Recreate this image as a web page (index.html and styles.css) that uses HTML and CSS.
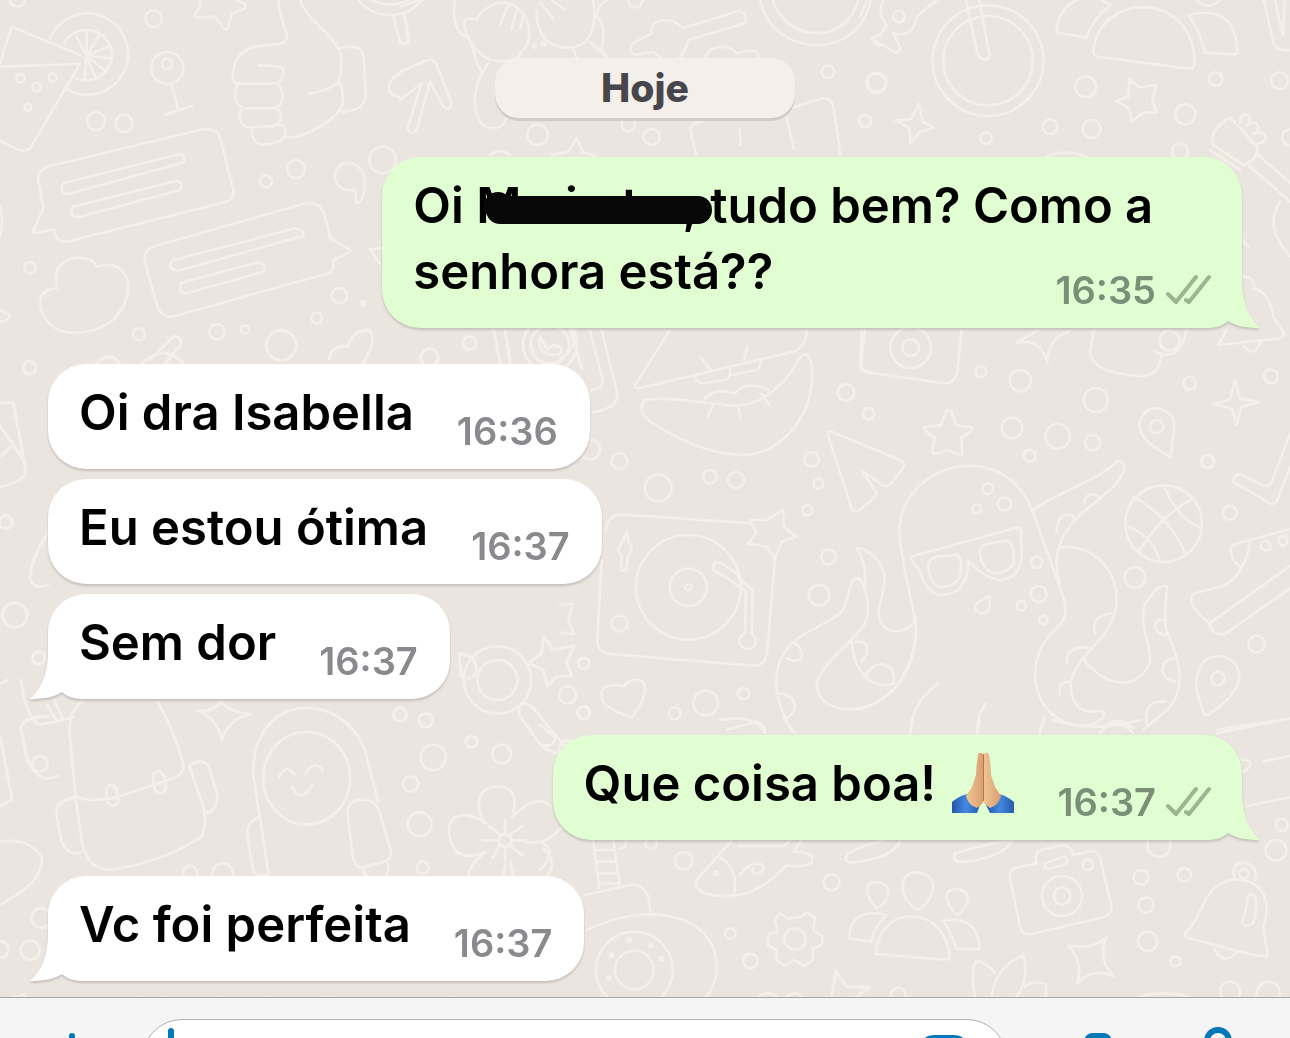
FILE: index.html
```html
<!DOCTYPE html>
<html lang="pt-BR">
<head>
    <meta charset="UTF-8">
    <meta name="viewport" content="width=device-width, initial-scale=1.0">
    <title>Conversa</title>
    <link rel="stylesheet" href="styles.css">
</head>
<body>
    <!-- Shared shapes -->
    <svg class="defs" aria-hidden="true">
        <symbol id="tail" viewBox="0 0 60 48">
            <path d="M0 0H42C42 22 48 37 60 48C46 48 36 46 28 41C22 46 16 48 6 48H0Z"/>
        </symbol>
        <symbol id="ticks" viewBox="0 0 46 32">
            <path d="M2 20L10 28L30 3M20 26L23 28L43 3" fill="none" stroke="currentColor" stroke-width="4" stroke-linecap="round" stroke-linejoin="round"/>
        </symbol>
    </svg>

    <main class="chat">
        <!-- Wallpaper -->
        <svg class="wallpaper" viewBox="0 0 1290 997" preserveAspectRatio="xMinYMin slice" aria-hidden="true">
            <g transform="scale(.3333)">
                <path d="M0 190L35 80L240 165M0 200L240 192L90 445Q75 460 40 443L0 422M150 115A122 122 0 1 1 200 267M192 130A76 76 0 1 1 222 232"/>
                <path d="M260 168V92M260 168L300 102M260 168L328 138M260 168L336 175M260 168L318 215M260 168L288 236M260 168L252 242M260 168L228 108"/>
                <circle cx="62" cy="235" r="13"/><circle cx="110" cy="261" r="12"/><circle cx="158" cy="233" r="12"/><circle cx="83" cy="322" r="10"/>
                <circle cx="461" cy="56" r="25"/><circle cx="288" cy="363" r="27"/><circle cx="372" cy="370" r="26"/><circle cx="52" cy="-4" r="24"/>
                <circle cx="502" cy="204" r="48"/><circle cx="501" cy="191" r="15"/><path d="M514 252L534 325M496 344L576 318"/>
                <path d="M600 0Q605 20 590 35Q575 55 600 52L645 50L672 85Q682 95 686 75L695 42L730 28Q745 18 730 8L712 0"/>
                <path d="M835 0Q840 50 860 100Q865 130 830 133L760 140Q700 160 698 230Q698 250 720 250H825Q850 245 850 215Q850 198 820 198L775 196M715 250Q700 270 708 300Q715 325 740 325H820Q850 320 848 285Q845 250 825 250M725 327Q712 350 725 370Q735 383 755 382L820 378Q845 370 842 345Q840 330 825 325M755 385Q755 435 795 434Q855 430 857 395Q857 375 838 375M857 412Q900 415 960 380Q1020 345 1028 310Q1032 260 1015 245Q1030 200 1020 155Q1005 120 960 80Q915 40 900 0M928 280Q980 275 1015 245M1020 145Q1060 135 1078 145Q1092 160 1092 190L1098 285Q1095 320 1060 330L1025 337"/>
                <path d="M1075 0Q1110 45 1170 45Q1230 45 1265 0M1115 0Q1170 28 1225 0M1180 48L1198 120Q1202 132 1215 130Q1230 130 1226 112L1213 42"/>
                <path d="M115 540Q110 510 150 498L600 390Q645 380 660 410L700 570Q705 600 670 608L205 724Q165 730 162 688L105 700Q95 698 103 685L130 625Z"/>
                <path d="M190 550L540 462Q560 468 550 488L205 582Q175 580 190 550ZM218 620L530 542Q555 548 540 570L235 652Q205 650 218 620Z"/>
                <path d="M435 785Q428 750 465 738L910 612Q960 600 975 650L992 716L1052 750Q1055 757 1000 780Q1005 810 985 820L525 948Q485 960 470 915Z"/>
                <path d="M515 782L885 685Q915 690 910 708L535 812Q500 808 515 782ZM545 848L770 788Q800 790 792 815L560 880Q530 878 545 848Z"/>
                <circle cx="798" cy="544" r="18"/><circle cx="888" cy="507" r="27"/><circle cx="90" cy="803" r="17"/><circle cx="1018" cy="887" r="23"/><circle cx="950" cy="954" r="16"/><circle cx="1090" cy="910" r="6"/><circle cx="651" cy="995" r="23"/><circle cx="735" cy="989" r="12"/><circle cx="417" cy="1003" r="18"/><circle cx="1148" cy="480" r="40"/>
                <path d="M1065 570Q1010 575 1004 530Q1008 485 1055 490Q1100 505 1095 565Q1090 605 1070 610Z"/>
                <path d="M170 865Q155 775 240 773Q280 775 290 800Q360 780 383 840Q395 900 340 960Q270 1010 190 995Q120 970 120 900Q130 865 170 865ZM1140 745L1110 748L1140 790M0 620Q12 665 0 710M0 930L28 945Q30 962 0 965"/>
            </g>
            <g transform="translate(860) scale(.3333)">
                <path d="M318 0L352 160Q360 182 380 178Q393 170 386 150L358 0"/>
                <circle cx="384" cy="182" r="166"/><circle cx="384" cy="182" r="134"/>
                <path d="M0 50L22 0M70 0Q50 40 80 75L60 105L35 115L110 160L122 145L100 100Q160 115 170 50L230 0"/><circle cx="117" cy="50" r="17"/>
                <path d="M650 0Q590 30 590 98L680 112Q695 60 752 15L725 0M700 160C710 -30 1010 -30 1003 195Q1000 208 980 205L710 170ZM985 45Q1130 10 1132 160Q1130 165 1115 163L1035 158Q1020 90 985 45ZM1010 0Q1045 35 1080 0M1212 0L1240 130Q1255 155 1290 150M1245 0L1268 105L1275 0"/>
                <circle cx="49" cy="248" r="28"/><circle cx="15" cy="363" r="18"/><circle cx="677" cy="260" r="31"/><circle cx="570" cy="380" r="22"/><circle cx="695" cy="387" r="27"/><circle cx="378" cy="414" r="17"/><circle cx="976" cy="343" r="30"/><circle cx="1067" cy="237" r="20"/><circle cx="1259" cy="242" r="25"/><circle cx="1290" cy="412" r="24"/><circle cx="960" cy="455" r="24"/>
                <path d="M176 312L188 365L222 384L180 395L152 430L148 385L107 362L153 357ZM808 238L840 262L888 255L877 302L892 338L850 338L815 365L808 325L767 303L805 290Z"/>
                <path d="M1060 435Q1045 390 1110 352L1192 440Q1195 480 1150 495ZM1140 370Q1140 340 1165 345Q1175 365 1160 378Q1185 360 1195 380Q1195 400 1180 400Q1205 390 1218 410Q1215 430 1195 430M1050 450L1140 510M1195 465L1290 548M1165 495L1290 605M1260 605Q1210 680 1290 768M1148 720L1165 740"/>
                <path d="M560 470Q610 445 680 470M1150 830Q1185 830 1182 865Q1230 880 1240 950L1275 1005"/>
            </g>
            <g transform="translate(860 330) scale(.3333)">
                <path d="M15 0L3 100Q5 125 30 128L250 160Q285 160 292 125L305 0"/><circle cx="152" cy="53" r="61"/><circle cx="152" cy="53" r="25"/>
                <path d="M470 38L535 0M470 38Q545 25 562 98Q565 25 625 5M702 0L690 70Q700 130 840 138Q900 140 905 70M885 65Q960 100 980 0M1075 45L1100 0M1075 45L1260 25Q1278 15 1265 0M1152 48Q1180 85 1200 40"/><circle cx="929" cy="32" r="30"/>
                <circle cx="363" cy="125" r="16"/><circle cx="481" cy="152" r="32"/><circle cx="707" cy="210" r="36"/><circle cx="456" cy="294" r="31"/><circle cx="593" cy="319" r="37"/><circle cx="698" cy="338" r="23"/><circle cx="509" cy="377" r="18"/><circle cx="989" cy="160" r="19"/><circle cx="1233" cy="139" r="21"/><circle cx="1043" cy="395" r="19"/><circle cx="1109" cy="548" r="21"/><circle cx="825" cy="743" r="31"/><circle cx="1190" cy="942" r="25"/>
                <path d="M258 245Q265 235 275 245L288 285L333 292Q340 298 330 305L303 325L308 370Q305 378 295 373L262 360L225 372Q213 372 217 360L225 325L195 300Q190 290 202 290L242 286Z"/>
                <path d="M932 380Q840 335 838 285Q845 235 890 235Q945 245 943 290ZM1125 150L1140 205L1195 216L1145 230L1130 285L1115 235L1060 222L1110 208Z"/><circle cx="890" cy="290" r="20"/>
                <path d="M1290 312L1235 455Q1225 475 1205 465L1140 432Q1128 430 1118 455L1230 520Q1243 528 1252 510L1290 412M1290 597L1125 643Q1105 650 1115 675Q1120 700 1145 710Q1165 680 1170 635M1145 710Q1120 765 1060 775L1005 790Q990 795 995 820Q1010 850 1048 880Q1060 920 1095 912L1290 775M1048 880L1290 708"/><circle cx="1217" cy="647" r="14"/><circle cx="1269" cy="632" r="14"/>
                <circle cx="911" cy="581" r="115"/><path d="M820 500Q930 560 975 670M805 590Q880 620 898 690M835 665Q900 560 990 510M915 475Q950 560 1018 592"/>
                <path d="M0 1138Q150 1090 168 910C170 850 115 680 118 590C130 470 240 405 335 408C430 410 490 470 520 550L595 760C620 820 630 860 590 895Q525 950 525 1040C535 1160 630 1200 700 1182Q735 1165 732 1150Q725 1138 700 1145C650 1150 630 1100 632 1060C650 960 770 930 770 805C765 710 700 645 600 652M518 542C580 490 720 450 770 395Q790 390 793 410C785 500 600 540 590 690Q588 720 600 765M590 605Q590 550 635 555L645 570M672 520Q680 480 718 500M705 910Q690 860 755 850M620 1000Q620 940 695 955M600 1095Q590 1060 625 1055M668 985C740 1080 840 1080 870 995C875 930 820 860 870 800Q900 760 922 770C915 830 910 890 925 915C960 990 980 1080 920 1140L850 1200M885 890Q885 865 915 870M885 890Q890 915 925 915M945 985Q905 990 908 1025Q915 1050 945 1055M860 1180Q850 1110 915 1115M730 1195Q770 1150 820 1195M555 1160L540 1200"/>
                <path d="M155 690Q150 680 170 675L470 593Q490 590 482 625Q500 745 420 750Q370 745 325 690C325 760 300 795 235 795Q195 780 180 725ZM205 715Q200 685 235 680L290 675Q310 685 300 740Q280 775 235 770Q210 755 205 715ZM360 675Q355 645 390 640L440 632Q468 640 460 705Q430 735 395 728Q365 710 360 675ZM388 798Q395 850 365 850Q335 840 350 820Z"/>
                <circle cx="383" cy="476" r="16"/><circle cx="350" cy="536" r="13"/><circle cx="433" cy="522" r="20"/><circle cx="530" cy="697" r="17"/><circle cx="536" cy="792" r="24"/><circle cx="484" cy="827" r="14"/><circle cx="550" cy="870" r="13"/><circle cx="26" cy="251" r="17"/>
                <path d="M235 1060Q155 1120 152 1200M378 1120Q350 1160 352 1200M1035 1155Q1005 1090 1010 1045Q1020 980 1078 978Q1140 985 1138 1050Q1125 1100 1045 1155ZM1070 1200L1290 1165"/><circle cx="1074" cy="1045" r="20"/>
            </g>
            <g transform="translate(560 330) scale(.3333)">
                <path d="M330 0L225 165Q220 178 245 173L700 65Q740 50 740 0M420 80L450 118M552 90L562 50M405 135Q405 160 430 160L495 150Q515 140 510 115M515 135L590 120Q605 110 602 90M255 210Q230 240 265 270C380 350 540 410 640 350Q770 260 755 100Q740 55 720 85C640 215 560 240 480 222C400 215 310 200 255 210ZM430 215Q450 170 525 190Q560 150 625 180M460 225L442 262M535 225L542 265M605 190L628 225M90 0L128 150Q130 175 95 180M125 0L172 190Q175 235 95 248M0 85Q50 60 45 0"/>
                <path d="M905 0L900 110Q905 125 930 128M815 305L1020 390Q1042 400 1025 420L990 465Q975 475 960 460L905 420L950 490Q948 500 935 510L900 540Q885 550 875 535L805 320Q800 300 815 305Z"/>
                <circle cx="858" cy="187" r="25"/><circle cx="926" cy="251" r="17"/><circle cx="178" cy="393" r="24"/><circle cx="90" cy="358" r="30"/><circle cx="295" cy="474" r="40"/><circle cx="450" cy="440" r="20"/><circle cx="528" cy="450" r="24"/><circle cx="755" cy="388" r="22"/><circle cx="775" cy="461" r="15"/><circle cx="742" cy="541" r="15"/><circle cx="806" cy="681" r="22"/><circle cx="777" cy="796" r="31"/><circle cx="71" cy="1000" r="17"/><circle cx="23" cy="1095" r="26"/><circle cx="437" cy="1119" r="37"/><circle cx="344" cy="1150" r="18"/><circle cx="550" cy="1091" r="17"/>
                <path d="M575 580L180 553Q140 560 138 600M125 690L112 930Q110 970 160 973L580 1007Q620 1008 622 960L645 685"/>
                <path d="M670 540L672 590L708 620L665 635L645 685L620 650L563 640L590 610L570 570L620 570ZM200 605L207 640Q225 655 205 675L198 722L183 720L185 675Q165 660 185 640Z"/>
                <circle cx="385" cy="772" r="157"/><circle cx="385" cy="772" r="56"/><circle cx="385" cy="772" r="9"/><circle cx="179" cy="880" r="24"/>
                <path d="M480 698L530 730Q530 742 578 780L575 910Q595 930 585 945Q565 970 540 945Q530 925 555 910L558 785L510 750L460 720Q460 690 480 698M0 825L38 822L25 870L42 912L0 908M135 1070Q170 1060 190 1070Q215 1040 250 1055Q270 1090 215 1162Q110 1130 125 1085Z"/>
                <path d="M695 1200Q640 1110 650 1030C670 900 800 900 850 840C870 790 870 740 895 745C925 770 930 850 915 880C870 950 790 990 770 1060C770 1130 850 1150 920 1130C1000 1100 1060 1030 1068 920V860C1050 920 960 920 955 850C960 800 990 750 960 700Q920 650 890 655Q920 700 915 765M875 935C880 1010 920 1080 1000 1062C1010 1020 980 990 940 1010L915 1035M885 935Q930 930 920 975L905 995M705 940Q730 955 725 985Q700 1000 680 985M655 1090Q700 1090 705 1130Q700 1160 670 1165M500 1200L590 1175Q610 1180 615 1200"/>
            </g>
            <g transform="translate(0 680) scale(.3508)">
                <path d="M60 0Q70 90 105 125Q120 130 210 105M135 70L160 115M155 60L180 110M235 60Q190 90 200 170L215 330Q240 350 330 335L495 280Q530 265 520 230Q490 130 450 65M215 335L235 470Q255 545 320 540Q460 520 570 450Q590 430 582 370L540 245M210 335Q160 345 160 380L175 460Q190 500 230 493M540 245Q570 220 595 245L620 330Q620 370 590 378M302 310Q315 290 332 310L338 345Q325 370 307 350ZM435 275Q450 245 468 275L473 310Q460 335 442 315Z"/>
                <path d="M565 88Q615 90 630 60Q650 92 715 97Q650 110 633 172Q620 110 565 88ZM770 580L722 270C715 40 970 20 1040 200L1078 345M740 390Q705 400 705 440L722 545Q730 560 765 555M990 370Q1000 335 1040 342Q1070 345 1080 370L1115 490Q1115 515 1090 520L1030 535Q1010 530 1005 500ZM1035 540Q1045 570 1065 567L1100 560Q1112 540 1105 520"/>
                <ellipse cx="874" cy="280" rx="124" ry="132"/><path d="M795 278Q815 235 840 270M872 265Q895 225 920 258M832 305Q860 355 890 298"/>
                <circle cx="114" cy="239" r="22"/><circle cx="542" cy="550" r="20"/><circle cx="635" cy="553" r="30"/><circle cx="1140" cy="98" r="19"/><circle cx="1214" cy="115" r="20"/><circle cx="1344" cy="176" r="16"/><circle cx="1235" cy="221" r="36"/><circle cx="1430" cy="211" r="27"/><circle cx="1171" cy="296" r="22"/><circle cx="1196" cy="411" r="34"/><circle cx="1205" cy="535" r="17"/><circle cx="118" cy="678" r="28"/><circle cx="86" cy="770" r="27"/><circle cx="0" cy="768" r="24"/>
                <circle cx="1418" cy="0" r="96"/><circle cx="1418" cy="0" r="57"/>
                <path d="M1480 70Q1500 60 1520 80L1610 190Q1620 215 1590 210Q1550 200 1530 170L1480 100ZM0 160L35 340L0 360M0 460Q90 450 120 510Q120 580 0 640"/>
                <path d="M1375 395Q1340 305 1425 303Q1485 310 1460 390Q1530 320 1570 360M1390 410C1310 360 1260 390 1288 470Q1310 520 1385 490Q1320 540 1340 580M1500 462Q1560 470 1600 420M1455 515Q1460 600 1540 580Q1600 530 1550 480M1440 530L1430 580M1440 435V400M1455 440L1490 415M1462 457H1500M1455 475L1490 500M1440 480V520M1425 470L1405 505M1420 457H1375M1425 440L1395 418"/><circle cx="1440" cy="457" r="18"/>
                <path d="M0 920L70 895L90 950M340 950L390 935L395 905M465 905Q455 930 465 950M595 950L635 905M725 950L765 905M925 905L930 950M945 905V950M1010 950Q1055 895 1100 950M1290 905L1305 950M1450 945L1500 915"/>
            </g>
            <g transform="translate(540 720) scale(.3333)">
                <path d="M160 362L178 505M220 362L240 498M165 390H225M170 425H230M175 460H235M180 490H240M135 525L270 495Q310 490 325 530L333 580M140 630C250 580 340 570 430 600C530 640 560 750 500 830"/>
                <circle cx="283" cy="750" r="115"/><circle cx="283" cy="750" r="58"/><circle cx="268" cy="661" r="5"/><circle cx="332" cy="677" r="5"/><circle cx="364" cy="716" r="5"/><circle cx="215" cy="706" r="5"/><circle cx="206" cy="774" r="5"/>
                <path d="M575 362L470 480Q460 500 490 518Q630 560 740 435Q780 445 815 430Q830 395 760 395L785 362M540 412Q600 450 580 530M598 378H730L750 362M600 465Q620 430 660 430Q685 445 655 460Q630 460 640 445M258 362Q260 390 240 385M1030 362Q970 375 925 400Q905 425 935 428Q1060 415 1080 362M540 0Q650 -20 675 40M735 0L765 40M1110 40L1118 0M1312 40L1318 0"/>
                <circle cx="528" cy="460" r="6"/><circle cx="431" cy="422" r="26"/><circle cx="334" cy="370" r="17"/><circle cx="571" cy="641" r="16"/><circle cx="631" cy="723" r="22"/><circle cx="875" cy="487" r="24"/><circle cx="765" cy="657" r="32"/><circle cx="1075" cy="825" r="22"/>
                <path d="M720 580L745 597L785 590L800 577L825 592L820 630L848 650L845 675L820 685L818 720L795 738L760 720L735 738L708 720L712 690L683 675L685 645L712 635L705 600Z"/>
                <path d="M1010 565C960 510 985 480 1015 487C1065 495 1045 550 1010 565ZM1128 570C1060 510 1090 450 1135 457C1215 470 1170 560 1128 570ZM1250 585C1200 530 1220 505 1255 507C1305 520 1280 570 1250 585ZM928 655Q930 560 1040 585Q1000 620 995 665ZM1008 700C1015 550 1220 550 1230 715Q1225 720 1200 718L1010 702ZM1210 600Q1320 590 1318 688L1248 685Q1235 640 1210 600Z"/>
                <path d="M875 830L888 752L920 800L988 802L950 830M655 830Q685 810 710 830M740 830Q765 810 785 830M0 365Q60 390 0 450M0 15L45 50Q40 90 0 70"/>
            </g>
            <g transform="translate(940 720) scale(.3333)">
                <path d="M210 475Q205 450 230 443L290 430Q280 395 310 388L370 375Q395 380 400 405L455 393Q475 395 480 415L515 560Q515 585 490 592L275 642Q245 645 240 620ZM315 430L370 410Q390 415 378 432L325 447Q310 445 315 430ZM45 400Q140 370 220 362M45 400Q30 430 80 425Q190 410 215 365"/>
                <circle cx="366" cy="528" r="60"/><circle cx="366" cy="528" r="25"/><circle cx="444" cy="435" r="16"/><circle cx="603" cy="472" r="22"/><circle cx="733" cy="464" r="20"/><circle cx="618" cy="555" r="23"/><circle cx="623" cy="664" r="29"/><circle cx="706" cy="724" r="15"/><circle cx="657" cy="375" r="35"/><circle cx="1008" cy="391" r="31"/><circle cx="1026" cy="315" r="18"/>
                <path d="M735 640C800 580 780 500 880 478C1010 480 980 600 970 620L983 705Q980 715 900 695L750 655Q730 650 735 640ZM885 475Q870 430 912 428Q955 435 945 480M925 525Q945 515 948 545Q950 600 935 612Q905 625 908 600Q920 570 925 525ZM822 685Q850 740 888 698"/><circle cx="912" cy="461" r="14"/>
                <path d="M385 677Q460 690 500 652Q470 710 520 770Q460 740 412 790Q430 725 385 677ZM105 830Q90 750 110 722Q150 735 165 760M155 830Q165 740 250 707Q270 770 230 830M255 800Q280 780 318 792V830M600 830Q670 810 745 830M845 830Q830 790 870 785Q910 790 898 830M950 830Q950 790 985 785Q1025 790 1018 830"/>
                <path d="M300 40L310 0M340 0Q450 40 600 0M480 40Q530 -20 580 40M830 40L1050 -5M905 120Q935 115 930 140L910 155M970 125L1050 108M920 258L1050 232M110 40L118 0"/>
            </g>
            <g transform="translate(400) scale(.3333)">
                <path d="M165 0Q150 90 205 115M290 10Q240 30 230 60Q190 45 192 75Q205 130 235 155Q280 200 350 175M290 10C340 0 400 40 385 130L350 175M300 75L325 15M335 85L350 30M360 85L370 50M410 35Q410 130 490 143Q600 150 580 0M620 0Q590 20 590 50Q620 70 605 150M570 125L625 175M520 145L530 175M420 10L460 55M455 0L495 30M215 125Q225 190 245 215M265 190C200 280 220 380 275 385Q310 385 320 355"/>
                <circle cx="402" cy="138" r="5"/><circle cx="430" cy="132" r="5"/><circle cx="706" cy="0" r="22"/>
                <path d="M755 100Q750 60 800 60Q835 65 848 85L1015 33Q1045 40 1035 70L865 120Q860 150 840 170M755 100L700 130Q680 150 705 165L760 155L780 172M915 170Q930 140 970 140Q1000 145 1010 160Q1080 140 1075 172M1080 0C1120 180 1380 180 1412 0M1118 0C1160 130 1340 135 1375 0M1440 105Q1410 110 1425 130L1440 138"/>
                <path d="M0 215L70 185Q100 170 110 195L155 310Q150 335 130 320L90 245L50 390Q35 410 22 385L65 250L0 300M0 20L55 0M12 40L25 125Q20 135 0 130"/>
                <path d="M0 218L-25 240Q-45 270 -20 285L0 292"/>
                <circle cx="413" cy="404" r="31"/><circle cx="685" cy="374" r="20"/><circle cx="755" cy="411" r="24"/><circle cx="1284" cy="215" r="19"/><circle cx="1430" cy="249" r="29"/><circle cx="1395" cy="363" r="18"/>
                <path d="M455 465L505 455L530 415L548 455L585 468M270 465Q300 440 330 465M888 465L872 390Q870 370 905 365M1170 325L1270 295Q1295 295 1300 320L1322 465M1160 350L1180 445M1018 385L1022 435"/>
            </g>
            <g transform="translate(0 330) scale(.3827)">
                <circle cx="77" cy="98" r="17"/><circle cx="735" cy="40" r="39"/><circle cx="1227" cy="34" r="17"/><circle cx="1122" cy="72" r="23"/><circle cx="15" cy="502" r="17"/><circle cx="39" cy="745" r="32"/><circle cx="101" cy="857" r="16"/><circle cx="1525" cy="1000" r="16"/><circle cx="1483" cy="1095" r="22"/>
                <path d="M0 190L35 190L68 370Q65 395 0 410M0 250L35 300L65 345M35 300L0 330M240 100Q290 40 320 100M395 75L455 15Q480 20 470 40L430 90M360 100Q430 20 490 100M860 75Q865 40 910 42Q920 0 965 0Q990 30 940 100Q920 110 900 98M1290 0L1310 100M1320 0L1335 100M1490 0L1520 100"/>
                <circle cx="1437" cy="38" r="70"/><circle cx="1437" cy="38" r="50"/><path d="M1412 20Q1400 55 1440 65Q1475 65 1465 45L1445 40L1430 50L1418 30Z"/>
                <path d="M175 445L200 420M330 445L350 420M400 445L410 420M890 445L885 420M980 445L1000 430H1050V445M1180 445Q1260 390 1350 445M125 530Q80 600 78 650Q90 680 125 665M0 925L20 915M1420 800L1445 835L1500 825L1480 870L1495 905L1455 905L1430 930L1420 890L1382 870L1415 845ZM1200 845Q1245 850 1245 890Q1235 920 1205 905ZM125 1010Q60 1010 55 1040L70 1120Q100 1190 150 1165"/>
            </g>
        </svg>

        <div class="date">Hoje</div>

        <div class="group sent">
            <div class="bubble">
                Oi <span class="redacted"><span>M</span><span>i</span><span>t</span><span>,</span></span>tudo bem? Como a senhora está??
                <span class="meta"><time datetime="16:35">16:35</time><svg class="ticks" role="img" aria-label="Entregue"><use href="#ticks"/></svg></span>
                <svg class="tail" aria-hidden="true"><use href="#tail"/></svg>
            </div>
        </div>

        <div class="group received">
            <div class="bubble">Oi dra Isabella <span class="meta"><time datetime="16:36">16:36</time></span></div>
            <div class="bubble">Eu estou ótima <span class="meta"><time datetime="16:37">16:37</time></span></div>
            <div class="bubble">
                Sem dor
                <span class="meta"><time datetime="16:37">16:37</time></span>
                <svg class="tail" aria-hidden="true"><use href="#tail"/></svg>
            </div>
        </div>

        <div class="group sent">
            <div class="bubble">
                Que coisa boa!
                <svg class="emoji" viewBox="0 0 62 62" role="img" aria-label="Mãos em oração">
                    <defs>
                        <linearGradient id="skin"><stop offset="0" stop-color="#efc694"/><stop offset="1" stop-color="#d99d70"/></linearGradient>
                        <linearGradient id="sleeve"><stop offset="0" stop-color="#2456a8"/><stop offset=".5" stop-color="#4389e2"/><stop offset="1" stop-color="#275ba8"/></linearGradient>
                    </defs>
                    <path d="M0 50Q7 44 15 42L28 53L25 61H0Z" fill="url(#sleeve)"/>
                    <path d="M62 50Q55 44 47 42L34 53L38 61H62Z" fill="url(#sleeve)"/>
                    <path d="M31 2Q27-1 26 3Q24 16 24 23L20 35L14 44Q16 53 25 56Q31 52 32 48Z" fill="url(#skin)"/>
                    <path d="M32 2Q36-1 37 3Q39 16 39 23L43 35L49 44Q47 53 38 56Q32 52 31 48Z" fill="url(#skin)"/>
                    <path d="M31.500 2V49" stroke="#b5744c" stroke-width="1" fill="none"/>
                </svg>
                <span class="meta"><time datetime="16:37">16:37</time><svg class="ticks" role="img" aria-label="Entregue"><use href="#ticks"/></svg></span>
                <svg class="tail" aria-hidden="true"><use href="#tail"/></svg>
            </div>
        </div>

        <div class="group received">
            <div class="bubble">
                Vc foi perfeita
                <span class="meta"><time datetime="16:37">16:37</time></span>
                <svg class="tail" aria-hidden="true"><use href="#tail"/></svg>
            </div>
        </div>
    </main>

    <footer class="composer">
        <button class="icon-btn" type="button" aria-label="Anexar">
            <svg viewBox="0 0 64 64"><path d="M32 9V55M9 32H55"/></svg>
        </button>
        <div class="field">
            <span class="caret"></span>
            <input type="text" aria-label="Mensagem">
            <button class="icon-btn" type="button" aria-label="Figurinhas">
                <svg viewBox="0 0 64 64"><path d="M23 11H41Q53 11 53 23V36L36 53H23Q11 53 11 41V23Q11 11 23 11ZM53 36H44Q36 36 36 44V53"/></svg>
            </button>
        </div>
        <div class="actions">
            <button class="icon-btn" type="button" aria-label="Câmera">
                <svg viewBox="0 0 64 64"><path d="M16 17Q19 17 21 13Q23 9 27 9H37Q41 9 43 13Q45 17 48 17H53Q60 17 60 24V48Q60 55 53 55H11Q4 55 4 48V24Q4 17 11 17Z"/><circle cx="32" cy="35" r="11"/></svg>
            </button>
            <button class="icon-btn" type="button" aria-label="Gravar áudio">
                <svg viewBox="0 0 64 64"><rect x="21" y="3" width="22" height="36" rx="11"/><path d="M11 30Q11 50 32 50Q53 50 53 30M32 50V62"/></svg>
            </button>
        </div>
    </footer>
</body>
</html>
```

FILE: styles.css
```css
* {
    margin: 0;
    padding: 0;
    box-sizing: border-box;
}

body {
    height: 100vh;
    overflow: hidden;
    background: #f5f5f6;
    font-family: Inter, "Liberation Sans", sans-serif;
    color: #000;
}

.defs {
    display: block;
    width: 0;
    height: 0;
}

.chat {
    position: relative;
    isolation: isolate;
    overflow: hidden;
    display: flex;
    flex-direction: column;
    gap: 36px;
    padding: 58px 48px 16px;
    background: #eae5df;
}

.wallpaper {
    position: absolute;
    inset: 0;
    z-index: -1;
    width: 100%;
    height: 100%;
    fill: none;
    stroke: #f4efe9;
    stroke-width: 8;
    stroke-linecap: round;
    stroke-linejoin: round;
}

.date {
    align-self: center;
    margin-bottom: 3px;
    padding: 0 106px;
    border-radius: 24px;
    background: #f4efe9;
    box-shadow: 0 3px 0 #d0cbc5;
    color: #47464d;
    font-size: 39px;
    font-weight: 800;
    line-height: 60px;
}

.group {
    display: flex;
    flex-direction: column;
    align-items: flex-start;
    gap: 10px;
}

.sent {
    align-items: flex-end;
}

.bubble {
    position: relative;
    display: flow-root;
    max-width: 72%;
    padding: 16px 32px 16px 31px;
    border-radius: 38px;
    background: #fff;
    filter: drop-shadow(0 2px 1px rgba(0, 0, 0, 0.16));
    font-size: 49px;
    font-weight: 600;
    line-height: 66px;
}

.sent .bubble {
    padding-right: 30px;
    background: #e0fed2;
}

/* floats onto the last line when there is room */
.meta {
    float: right;
    display: flex;
    align-items: center;
    gap: 10px;
    margin: 29px 0 0 43px;
    color: #8a8a8e;
    font-size: 38px;
    line-height: 44px;
}

.sent .meta {
    color: #7b8f78;
}

.ticks {
    width: 46px;
    height: 32px;
    color: #9bb592;
}

.tail {
    position: absolute;
    right: -18px;
    bottom: 0;
    z-index: -1;
    width: 60px;
    height: 48px;
    fill: #e0fed2;
}

.received .tail {
    right: auto;
    left: -18px;
    fill: #fff;
    transform: scaleX(-1);
}

.redacted {
    position: relative;
    display: inline-flex;
    justify-content: space-between;
    width: 222px;
    margin-right: 12px;
}

.redacted::before,
.redacted::after {
    content: "";
    position: absolute;
    background: #080808;
    border-radius: 14px;
}

.redacted::before {
    left: 8px;
    top: 19px;
    width: 28px;
    height: 28px;
}

.redacted::after {
    left: 10px;
    right: -14px;
    top: 23px;
    height: 28px;
}

.emoji {
    width: 62px;
    height: 62px;
    margin-left: 4px;
    vertical-align: -13px;
}

.composer {
    display: flex;
    align-items: center;
    padding: 21px 40px;
    border-top: 1px solid #a9a8a6;
    background: #f5f5f6;
}

.field {
    flex: 1;
    display: flex;
    align-items: center;
    min-width: 0;
    height: 80px;
    margin: 0 59px 0 38px;
    padding: 0 30px 0 25px;
    border: 1px solid #b1b1b3;
    border-radius: 40px;
    background: #fff;
}

.caret {
    flex: none;
    width: 6px;
    height: 62px;
    border-radius: 3px;
    background: #0579b8;
}

.field input {
    flex: 1;
    min-width: 0;
    border: none;
    outline: none;
    background: transparent;
    font: inherit;
    font-size: 49px;
}

.actions {
    display: flex;
    gap: 56px;
}

.icon-btn {
    flex: none;
    width: 64px;
    height: 64px;
    border: none;
    background: transparent;
    cursor: pointer;
}

.icon-btn svg {
    display: block;
    width: 64px;
    height: 64px;
    fill: none;
    stroke: #0579b8;
    stroke-width: 6;
    stroke-linecap: round;
    stroke-linejoin: round;
}
```
